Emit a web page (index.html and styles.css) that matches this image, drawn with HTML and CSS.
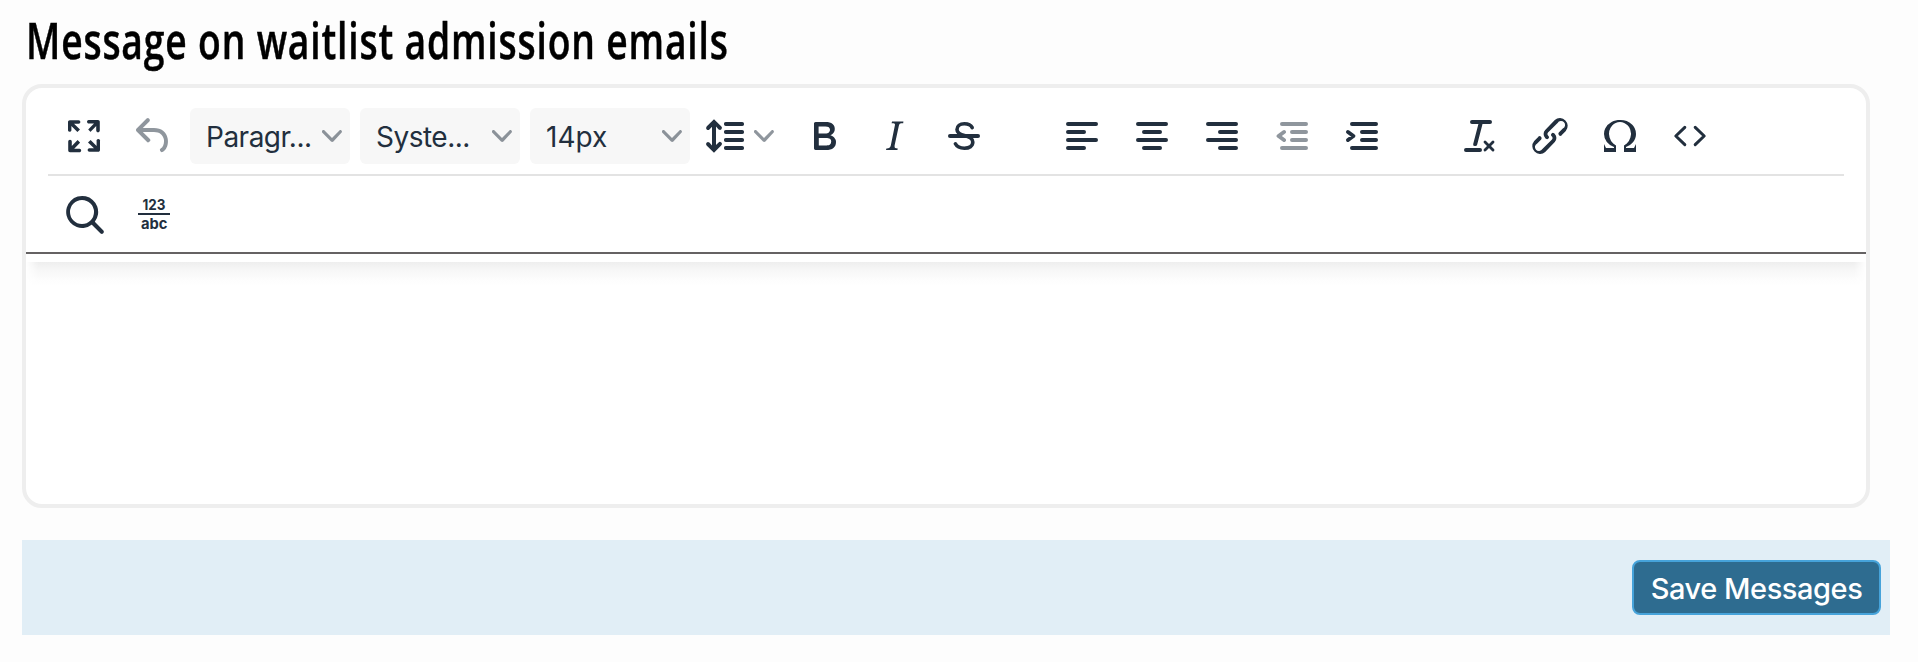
FILE: index.html
```html
<!DOCTYPE html>
<html lang="en">
<head>
<meta charset="utf-8">
<title>Message on waitlist admission emails</title>
<link rel="stylesheet" href="styles.css">
</head>
<body>
<svg class="defs" width="0" height="0"><symbol id="chev" viewBox="0 0 10 10"><path d="M8.7 2.2c.3-.3.8-.3 1 0 .4.4.4.9 0 1.2L5.7 7.8c-.3.3-.9.3-1.2 0L.2 3.4a.8.8 0 0 1 0-1.2c.3-.3.8-.3 1.1 0L5 6l3.7-3.8Z"/></symbol></svg>
<h1 class="title"><span class="title-text">Message on waitlist admission emails</span></h1>
<div class="editor">
  <div class="header">
    <div class="toolbar">
      <div class="group first">
        <button class="tool"><svg viewBox="0 0 24 24"><path d="M15.3 10l-1.2-1.3 2.9-3h-2.3a.9.9 0 1 1 0-1.7H19c.5 0 .9.4.9.9v4.4a.9.9 0 1 1-1.8 0V7l-2.9 3zm0 4l3 3v-2.3a.9.9 0 1 1 1.7 0V19c0 .5-.4.9-.9.9h-4.4a.9.9 0 1 1 0-1.8H17l-3-2.9 1.3-1.2zM10 15.4l-2.9 3h2.3a.9.9 0 1 1 0 1.7H5a.9.9 0 0 1-.9-.9v-4.4a.9.9 0 1 1 1.8 0V17l2.9-3 1.2 1.3zM8.7 10L5.7 7v2.3a.9.9 0 0 1-1.7 0V5c0-.5.4-.9.9-.9h4.4a.9.9 0 0 1 0 1.8H7l3 2.9-1.3 1.2z"/></svg></button>
        <button class="tool disabled"><svg viewBox="0 0 24 24"><path d="M6.4 8H12c3.7 0 6.2 2 6.8 5.1.6 2.7-.4 5.6-2.3 6.8a1 1 0 0 1-1-1.8c1.1-.6 1.8-2.7 1.4-4.6-.5-2.1-2.1-3.5-4.9-3.5H6.4l3.3 3.3a1 1 0 1 1-1.4 1.4l-5-5a1 1 0 0 1 0-1.4l5-5a1 1 0 0 1 1.4 1.4L6.4 8Z"/></svg></button>
      </div>
      <div class="group selects">
        <button class="select"><span class="tight">Paragr...</span><svg class="chev"><use href="#chev"/></svg></button>
        <button class="select"><span class="tight">Syste...</span><svg class="chev"><use href="#chev"/></svg></button>
        <button class="select"><span>14px</span><svg class="chev"><use href="#chev"/></svg></button>
      </div>
      <div class="group formats">
        <button class="tool split"><svg viewBox="0 0 24 24"><path d="M21 5a1 1 0 0 1 .1 2H13a1 1 0 0 1-.1-2H21zm0 4a1 1 0 0 1 .1 2H13a1 1 0 0 1-.1-2H21zm0 4a1 1 0 0 1 .1 2H13a1 1 0 0 1-.1-2H21zm0 4a1 1 0 0 1 .1 2H13a1 1 0 0 1-.1-2H21zM7 3.6l3.7 3.7a1 1 0 0 1-1.3 1.5h-.1L8 7.3v9.2l1.3-1.3a1 1 0 0 1 1.3 0h.1c.4.4.4 1 0 1.3v.1L7 20.4l-3.7-3.7a1 1 0 0 1 1.3-1.5h.1L6 16.7V7.4L4.7 8.7a1 1 0 0 1-1.3 0h-.1a1 1 0 0 1 0-1.3v-.1L7 3.6z"/></svg><svg class="chev"><use href="#chev"/></svg></button>
        <button class="tool"><svg viewBox="0 0 24 24"><path fill-rule="evenodd" d="M7.8 19c-.3 0-.5 0-.6-.2l-.2-.5V5.7c0-.2 0-.4.2-.5l.6-.2h5c1.5 0 2.7.3 3.5 1 .7.6 1.1 1.4 1.1 2.5a3 3 0 0 1-.6 1.9c-.4.6-1 1-1.6 1.2.4.1.9.3 1.3.6s.8.7 1 1.2c.4.4.5 1 .5 1.6 0 1.3-.4 2.3-1.3 3-.8.7-2.1 1-3.8 1H7.8zm5-8.3c.6 0 1.2-.1 1.6-.5.4-.3.6-.7.6-1.3 0-1.1-.8-1.7-2.3-1.7H9.3v3.5h3.4zm.5 6c.7 0 1.3-.1 1.7-.4.4-.4.6-.9.6-1.5s-.2-1-.7-1.4c-.4-.3-1-.4-2-.4H9.4v3.8h4z"/></svg></button>
        <button class="tool"><svg viewBox="0 0 24 24"><path d="M16.7 4.7l-.1.9h-.3c-.6 0-1 0-1.4.3-.3.3-.4.6-.5 1.1l-2.1 9.8v.6c0 .5.4.8 1.4.8h.2l-.2.8H8l.2-.8h.2c1.1 0 1.8-.5 2-1.5l2-9.8.1-.5c0-.6-.4-.8-1.4-.8h-.3l.2-.9h5.8z"/></svg></button>
        <button class="tool"><svg viewBox="0 0 24 24"><path class="line medium" d="M16.1 7.8C15.4 6.4 14 5.9 12.2 5.9c-2.3 0-3.7 1.1-3.7 2.85 0 1.7 1.2 2.4 3.7 3 2.9.65 4.2 1.55 4.2 3.3 0 2-1.7 3.05-4.2 3.05-2.2 0-3.8-.8-4.5-2.2"/><path class="line" d="M5 12h14"/></svg></button>
      </div>
      <div class="group aligns">
        <button class="tool"><svg viewBox="0 0 24 24"><path class="line" d="M5 6h14M5 10h8M5 14h14M5 18h8"/></svg></button>
        <button class="tool"><svg viewBox="0 0 24 24"><path class="line" d="M5 6h14M8 10h8M5 14h14M8 18h8"/></svg></button>
        <button class="tool"><svg viewBox="0 0 24 24"><path class="line" d="M5 6h14M11 10h8M5 14h14M11 18h8"/></svg></button>
        <button class="tool disabled"><svg viewBox="0 0 24 24"><path class="line" d="M7 6h12M12 10h7M12 14h7M7 18h12M8 10l-2.7 2L8 14"/></svg></button>
        <button class="tool"><svg viewBox="0 0 24 24"><path class="line" d="M7 6h12M12 10h7M12 14h7M7 18h12M5 10l2.7 2L5 14"/></svg></button>
      </div>
      <div class="group inserts">
        <button class="tool"><svg viewBox="0 0 24 24"><path d="M13.2 6a1 1 0 0 1 0 .2l-2.6 10a1 1 0 0 1-1 .8h-.2a.8.8 0 0 1-.8-1l2.6-10H8a1 1 0 1 1 0-2h9a1 1 0 0 1 0 2h-3.8zM5 18h7a1 1 0 0 1 0 2H5a1 1 0 0 1 0-2zm13 1.5L16.5 18 15 19.5a.7.7 0 0 1-1-1l1.5-1.5-1.5-1.5a.7.7 0 0 1 1-1l1.5 1.5 1.5-1.5a.7.7 0 0 1 1 1L17.5 17l1.5 1.5a.7.7 0 0 1-1 1z"/></svg></button>
        <button class="tool"><svg viewBox="0 0 24 24"><path d="M6.2 12.3a1 1 0 0 1 1.4 1.4l-2 2a2 2 0 1 0 2.6 2.8l4.8-4.8a1 1 0 0 0 0-1.4 1 1 0 1 1 1.4-1.3 2.9 2.9 0 0 1 0 4L9.6 20a3.9 3.9 0 0 1-5.5-5.5l2-2zm11.6-.6a1 1 0 0 1-1.4-1.4l2-2a2 2 0 1 0-2.6-2.8L11 10.3a1 1 0 0 0 0 1.4A1 1 0 1 1 9.6 13a2.9 2.9 0 0 1 0-4L14.4 4a3.9 3.9 0 0 1 5.5 5.5l-2 2z"/></svg></button>
        <button class="tool"><svg viewBox="0 0 24 24"><path d="M15 18h4l1-2v4h-6v-3.3l1.4-1a6 6 0 0 0 1.8-2.9 6.3 6.3 0 0 0-.1-4.1 5.8 5.8 0 0 0-3-3.2c-.6-.3-1.3-.5-2.1-.5a5.1 5.1 0 0 0-3.9 1.8 6.3 6.3 0 0 0-1.3 6 6.2 6.2 0 0 0 1.8 3l1.4.9V20H4v-4l1 2h4v-.5l-2-1L5.4 15A6.5 6.5 0 0 1 4 11c0-1 .2-1.9.6-2.7A7 7 0 0 1 7.8 5C9.1 4.3 10.5 4 12 4a8.6 8.6 0 0 1 6 2.2c.7.6 1.1 1.3 1.4 2.1.4.8.6 1.7.6 2.7 0 1.5-.5 2.8-1.4 4a9 9 0 0 1-1.6 1.5l-2 1v.5z"/></svg></button>
        <button class="tool"><svg viewBox="0 0 24 24"><path class="line thin" d="M9.4 7.7L4.9 12l4.5 4.3M14.6 7.7l4.5 4.3-4.5 4.3"/></svg></button>
      </div>
    </div>
    <div class="toolbar second">
      <div class="group first">
        <button class="tool"><svg viewBox="0 0 24 24"><path d="M16 17.3a8 8 0 1 1 1.4-1.4l4.3 4.4a1 1 0 0 1-1.4 1.4l-4.4-4.3zm-5-.3a6 6 0 1 0 0-12 6 6 0 0 0 0 12z"/></svg></button>
        <button class="tool"><svg viewBox="0 0 48 48"><text class="count" x="12.5" y="20" textLength="23" lengthAdjust="spacingAndGlyphs">123</text><path d="M8 23h32v2H8z"/><text class="count" x="11" y="38.5" textLength="26.5" lengthAdjust="spacingAndGlyphs">abc</text></svg></button>
      </div>
    </div>
  </div>
  <div class="content"><div class="shade"></div></div>
</div>
<div class="actions"><button class="save">Save Messages</button></div>
</body>
</html>
```
FILE: styles.css
```css
* { box-sizing: border-box; }
body { margin: 0; height: 662px; padding: 0 28px 0 22px; background: #fdfdfd; font-family: Inter, "Liberation Sans", sans-serif; overflow: hidden; }
button { border: 0; background: none; padding: 0; font: inherit; color: inherit; }
.defs { display: block; }
.title { margin: 0; height: 84px; padding-left: 4px; font: 600 51px/78px "Open Sans", "Noto Sans", sans-serif; color: #000; white-space: nowrap; }
.title-text { display: inline-block; letter-spacing: 1.15px; -webkit-text-stroke: .5px #000; transform: scaleX(.73); transform-origin: 0 50%; }
.editor { width: 1848px; height: 424px; border: 4px solid #eee; border-radius: 20px; background: #fff; overflow: hidden; color: #222f3e; }
.header { height: 166px; border-bottom: 2px solid #656263; }
.toolbar { display: flex; align-items: center; height: 88px; margin: 0 22px; padding-top: 10px; border-bottom: 2px solid #e3e3e3; }
.toolbar.second { height: 76px; padding-top: 0; border-bottom: 0; }
.group { display: flex; gap: 2px; }
.first { padding-left: 2px; }
.selects { gap: 10px; margin-left: 2px; }
.formats { margin-left: 4px; }
.aligns { margin-left: 50px; }
.inserts { margin-left: 50px; }
.tool { display: flex; align-items: center; justify-content: center; width: 68px; height: 56px; }
.tool svg { display: block; width: 48px; height: 48px; fill: #222f3e; }
.tool.disabled svg { opacity: .5; }
.tool svg .line { fill: none; stroke: #222f3e; stroke-width: 2; stroke-linecap: round; stroke-linejoin: round; }
.tool svg .medium { stroke-width: 1.8; }
.tool svg .thin { stroke-width: 1.5; }
.tool.split { width: 94px; justify-content: flex-start; padding-left: 6px; gap: 6px; }
.chev { width: 20px; height: 20px; fill: #222f3e; opacity: .5; flex: none; }
.tool.split .chev { width: 20px; height: 20px; }
.select { display: flex; align-items: center; justify-content: space-between; width: 160px; height: 56px; padding: 0 8px 0 16px; border-radius: 6px; background: #f7f7f7; font-size: 28px; line-height: 56px; white-space: nowrap; }
.select span { padding-top: 2px; }
.tight { letter-spacing: -.5px; }
.count { font: 700 15px Inter, sans-serif; }
.content { padding-top: 8px; }
.shade { height: 24px; background: linear-gradient(#eee, #f7f7f7 35%, #fdfdfd 75%, #fff); -webkit-mask-image: linear-gradient(90deg, transparent, #000 12px, #000 calc(100% - 12px), transparent); mask-image: linear-gradient(90deg, transparent, #000 12px, #000 calc(100% - 12px), transparent); }
.actions { display: flex; justify-content: flex-end; align-items: center; height: 95px; margin-top: 32px; padding-right: 9px; background: #e1eef6; }
.save { width: 249px; height: 55px; padding-top: 1px; border: 2px solid #46a3da; border-radius: 8px; background: #2e6c90; color: #fff; font-size: 29px; font-weight: 500; letter-spacing: -.45px; white-space: nowrap; }
```
